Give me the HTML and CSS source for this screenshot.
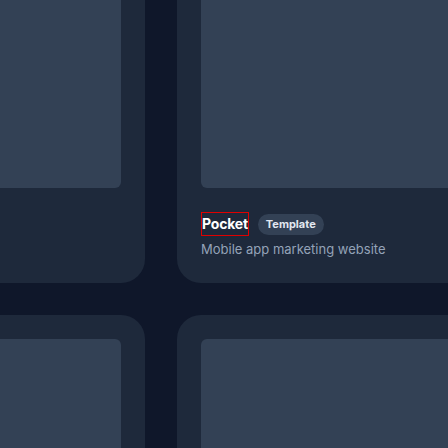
FILE: index.html
```html
<!DOCTYPE html>
<html lang="en">
<head>
<meta charset="utf-8">
<title>Templates</title>
<link rel="stylesheet" href="styles.css">
</head>
<body>
<div class="grid">
  <div class="card">
    <div class="thumb"></div>
    <div class="title-row"><span class="title">Pocket</span><span class="badge">Template</span></div>
    <p class="desc">Mobile app marketing website</p>
  </div>
  <div class="card">
    <div class="thumb"></div>
    <div class="title-row"><span class="title">Pocket</span><span class="badge">Template</span></div>
    <p class="desc">Mobile app marketing website</p>
  </div>
  <div class="card">
    <div class="thumb"></div>
    <div class="title-row"><span class="title">Pocket</span><span class="badge">Template</span></div>
    <p class="desc">Mobile app marketing website</p>
  </div>
  <div class="card">
    <div class="thumb"></div>
    <div class="title-row"><span class="title">Pocket</span><span class="badge">Template</span></div>
    <p class="desc">Mobile app marketing website</p>
  </div>
</div>
</body>
</html>
```
FILE: styles.css
```css
html, body {
  margin: 0;
  padding: 0;
  background: #0f172a;
  overflow: hidden;
  font-family: Inter, "Noto Sans", sans-serif;
}
.grid {
  display: grid;
  grid-template-columns: repeat(2, 400px);
  gap: 32px;
  margin-left: -255px;
  margin-top: -92px;
}
.card {
  background: #1e293b;
  border-radius: 24px;
  padding: 24px;
}
.thumb {
  height: 256px;
  background: #334155;
  border-radius: 6px;
}
.title-row {
  margin-top: 24px;
  display: flex;
  align-items: center;
  gap: 9px;
  height: 24px;
}
.title {
  box-sizing: border-box;
  height: 24px;
  line-height: 22px;
  border: 1px solid #e00000;
  color: #ffffff;
  font-weight: 700;
  font-size: 14px;
  letter-spacing: -0.2px;
}
.badge {
  background: #334155;
  color: #e2e8f0;
  font-size: 11px;
  font-weight: 700;
  line-height: 21px;
  padding: 0 8px;
  border-radius: 999px;
}
.desc {
  margin: 3px 0 0;
  font-size: 13px;
  line-height: 20px;
  color: #94a3b8;
}
```
